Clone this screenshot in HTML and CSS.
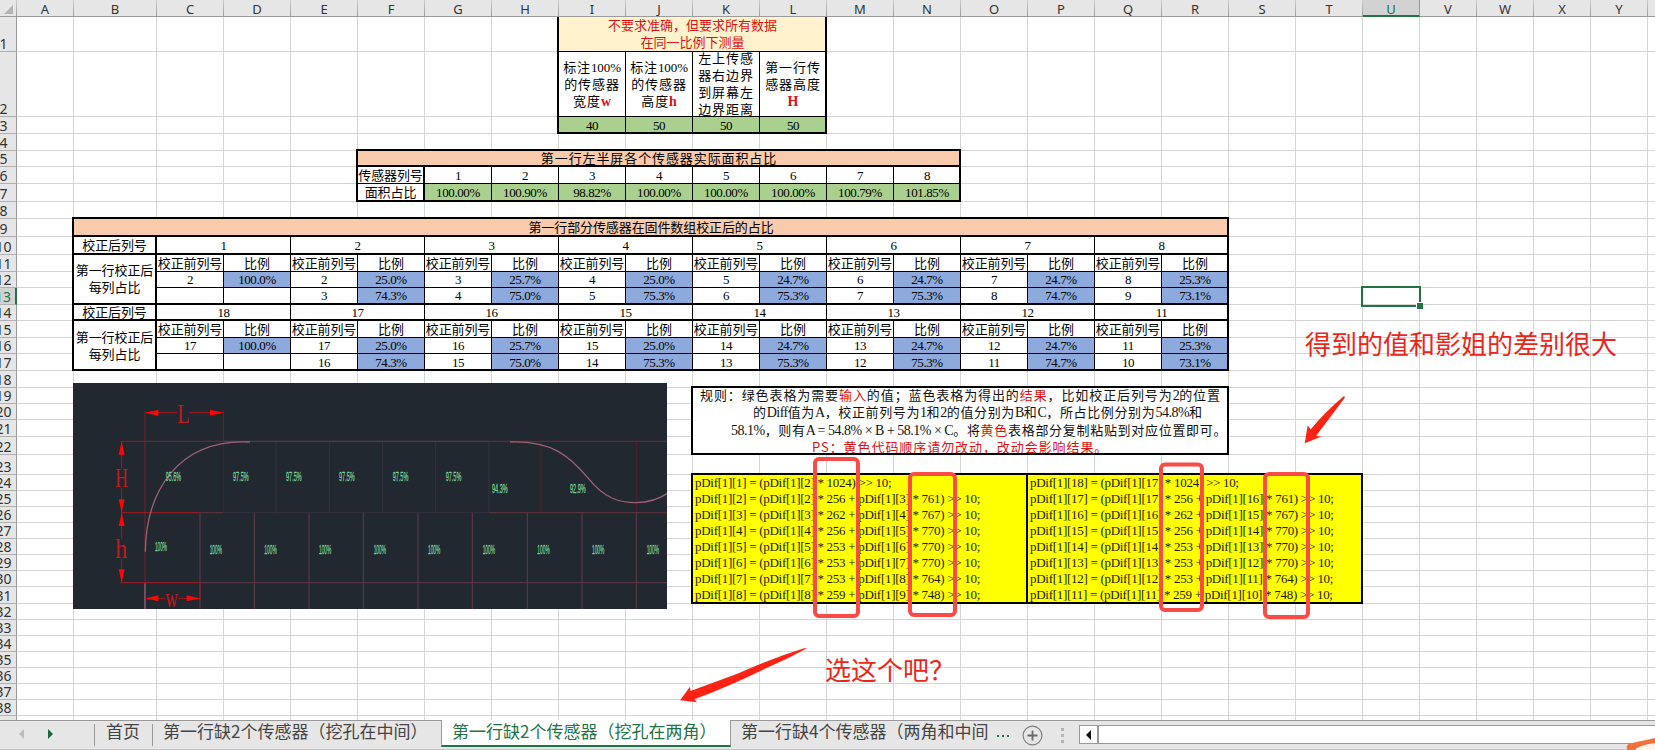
FILE: index.html
```html
<!DOCTYPE html>
<html lang="zh-CN">
<head>
<meta charset="utf-8">
<title>传感器面积占比</title>
<link rel="stylesheet" href="styles.css">
</head>
<body>
<main class="window">
<section class="sheet">
  <div class="colhead">
    <div class="corner"><svg viewBox="0 0 17 16"><path d="M13 5v9H4z" fill="#b4b4b4"/></svg></div>
    <div>A</div><div>B</div><div>C</div><div>D</div><div>E</div><div>F</div><div>G</div><div>H</div><div>I</div><div>J</div><div>K</div><div>L</div><div>M</div><div>N</div><div>O</div><div>P</div><div>Q</div><div>R</div><div>S</div><div>T</div><div class="on">U</div><div>V</div><div>W</div><div>X</div><div>Y</div><div></div>
  </div>
  <div class="rowhead">
    <div>1</div><div>2</div><div>3</div><div>4</div><div>5</div><div>6</div><div>7</div><div>8</div><div>9</div><div>10</div><div>11</div><div>12</div><div class="on">13</div><div>14</div><div>15</div><div>16</div><div>17</div><div>18</div><div>19</div><div>20</div><div>21</div><div>22</div><div>23</div><div>24</div><div>25</div><div>26</div><div>27</div><div>28</div><div>29</div><div>30</div><div>31</div><div>32</div><div>33</div><div>34</div><div>35</div><div>36</div><div>37</div><div>38</div><div></div>
  </div>
  <div class="vlines"><i></i><i></i><i></i><i></i><i></i><i></i><i></i><i></i><i></i><i></i><i></i><i></i><i></i><i></i><i></i><i></i><i></i><i></i><i></i><i></i><i></i><i></i><i></i><i></i><i></i></div>
  <div class="hlines"><i></i><i></i><i></i><i></i><i></i><i></i><i></i><i></i><i></i><i></i><i></i><i></i><i></i><i></i><i></i><i></i><i></i><i></i><i></i><i></i><i></i><i></i><i></i><i></i><i></i><i></i><i></i><i></i><i></i><i></i><i></i><i></i><i></i><i></i><i></i><i></i><i></i><i></i></div>

  <div class="tbl inputs">
    <div class="title cream"><p>不要求准确，但要求所有数据<br>在同一比例下测量</p></div>
    <div class="wide"><p>标注<span>100%</span><br>的传感器<br>宽度<b>w</b></p></div>
    <div class="wide"><p>标注<span>100%</span><br>的传感器<br>高度<b>h</b></p></div>
    <div class="wide"><p>左上传感<br>器右边界<br>到屏幕左<br>边界距离</p></div>
    <div class="wide"><p>第一行传<br>感器高度<br><b>H</b></p></div>
    <div class="green">40</div><div class="green">50</div><div class="green">50</div><div class="green">50</div>
  </div>

  <div class="tbl area">
    <div class="title peach wide thick">第一行左半屏各个传感器实际面积占比</div>
    <div class="cn side">传感器列号</div><div>1</div><div>2</div><div>3</div><div>4</div><div>5</div><div>6</div><div>7</div><div>8</div>
    <div class="cn side">面积占比</div><div class="green">100.00%</div><div class="green">100.90%</div><div class="green">98.82%</div><div class="green">100.00%</div><div class="green">100.00%</div><div class="green">100.00%</div><div class="green">100.79%</div><div class="green">101.85%</div>
  </div>

  <div class="tbl ratio">
    <div class="title peach cn thick">第一行部分传感器在固件数组校正后的占比</div>
    <div class="cn side thick">校正后列号</div><div class="two thick">1</div><div class="two thick">2</div><div class="two thick">3</div><div class="two thick">4</div><div class="two thick">5</div><div class="two thick">6</div><div class="two thick">7</div><div class="two thick">8</div>
    <div class="cn side tall thick"><p>第一行校正后<br>每列占比</p></div>
    <div class="cn">校正前列号</div><div class="cn">比例</div><div class="cn">校正前列号</div><div class="cn">比例</div><div class="cn">校正前列号</div><div class="cn">比例</div><div class="cn">校正前列号</div><div class="cn">比例</div><div class="cn">校正前列号</div><div class="cn">比例</div><div class="cn">校正前列号</div><div class="cn">比例</div><div class="cn">校正前列号</div><div class="cn">比例</div><div class="cn">校正前列号</div><div class="cn">比例</div>
    <div>2</div><div class="blue">100.0%</div><div>2</div><div class="blue">25.0%</div><div>3</div><div class="blue">25.7%</div><div>4</div><div class="blue">25.0%</div><div>5</div><div class="blue">24.7%</div><div>6</div><div class="blue">24.7%</div><div>7</div><div class="blue">24.7%</div><div>8</div><div class="blue">25.3%</div>
    <div class="thick"></div><div class="thick"></div><div class="thick">3</div><div class="blue thick">74.3%</div><div class="thick">4</div><div class="blue thick">75.0%</div><div class="thick">5</div><div class="blue thick">75.3%</div><div class="thick">6</div><div class="blue thick">75.3%</div><div class="thick">7</div><div class="blue thick">75.3%</div><div class="thick">8</div><div class="blue thick">74.7%</div><div class="thick">9</div><div class="blue thick">73.1%</div>
    <div class="cn side thick">校正后列号</div><div class="two thick">18</div><div class="two thick">17</div><div class="two thick">16</div><div class="two thick">15</div><div class="two thick">14</div><div class="two thick">13</div><div class="two thick">12</div><div class="two thick">11</div>
    <div class="cn side tall"><p>第一行校正后<br>每列占比</p></div>
    <div class="cn">校正前列号</div><div class="cn">比例</div><div class="cn">校正前列号</div><div class="cn">比例</div><div class="cn">校正前列号</div><div class="cn">比例</div><div class="cn">校正前列号</div><div class="cn">比例</div><div class="cn">校正前列号</div><div class="cn">比例</div><div class="cn">校正前列号</div><div class="cn">比例</div><div class="cn">校正前列号</div><div class="cn">比例</div><div class="cn">校正前列号</div><div class="cn">比例</div>
    <div>17</div><div class="blue">100.0%</div><div>17</div><div class="blue">25.0%</div><div>16</div><div class="blue">25.7%</div><div>15</div><div class="blue">25.0%</div><div>14</div><div class="blue">24.7%</div><div>13</div><div class="blue">24.7%</div><div>12</div><div class="blue">24.7%</div><div>11</div><div class="blue">25.3%</div>
    <div></div><div></div><div>16</div><div class="blue">74.3%</div><div>15</div><div class="blue">75.0%</div><div>14</div><div class="blue">75.3%</div><div>13</div><div class="blue">75.3%</div><div>12</div><div class="blue">75.3%</div><div>11</div><div class="blue">74.7%</div><div>10</div><div class="blue">73.1%</div>
  </div>

  <div class="rules">
    <p class="r1">规则：绿色表格为需要<b>输入</b>的值；蓝色表格为得出的<b>结果</b>，比如校正后列号为<span>2</span>的位置</p>
    <p class="r2">的<span>Diff</span>值为<span>A</span>，校正前列号为<span>1</span>和<span>2</span>的值分别为<span>B</span>和<span>C</span>，所占比例分别为<span>54.8%</span>和</p>
    <p class="r3"><span>58.1%</span>，则有<span>A = 54.8% × B + 58.1% × C</span>。将<b>黄色</b>表格部分复制粘贴到对应位置即可。</p>
    <p class="r4"><b>PS：黄色代码顺序请勿改动，改动会影响结果。</b></p>
  </div>

  <div class="code left">
    <p>pDif[1][1] = (pDif[1][2] * 1024) &gt;&gt; 10;</p>
    <p>pDif[1][2] = (pDif[1][2] * 256 + pDif[1][3] * 761) &gt;&gt; 10;</p>
    <p>pDif[1][3] = (pDif[1][3] * 262 + pDif[1][4] * 767) &gt;&gt; 10;</p>
    <p>pDif[1][4] = (pDif[1][4] * 256 + pDif[1][5] * 770) &gt;&gt; 10;</p>
    <p>pDif[1][5] = (pDif[1][5] * 253 + pDif[1][6] * 770) &gt;&gt; 10;</p>
    <p>pDif[1][6] = (pDif[1][6] * 253 + pDif[1][7] * 770) &gt;&gt; 10;</p>
    <p>pDif[1][7] = (pDif[1][7] * 253 + pDif[1][8] * 764) &gt;&gt; 10;</p>
    <p>pDif[1][8] = (pDif[1][8] * 259 + pDif[1][9] * 748) &gt;&gt; 10;</p>
  </div>
  <div class="code right">
    <p>pDif[1][18] = (pDif[1][17] * 1024) &gt;&gt; 10;</p>
    <p>pDif[1][17] = (pDif[1][17] * 256 + pDif[1][16] * 761) &gt;&gt; 10;</p>
    <p>pDif[1][16] = (pDif[1][16] * 262 + pDif[1][15] * 767) &gt;&gt; 10;</p>
    <p>pDif[1][15] = (pDif[1][15] * 256 + pDif[1][14] * 770) &gt;&gt; 10;</p>
    <p>pDif[1][14] = (pDif[1][14] * 253 + pDif[1][13] * 770) &gt;&gt; 10;</p>
    <p>pDif[1][13] = (pDif[1][13] * 253 + pDif[1][12] * 770) &gt;&gt; 10;</p>
    <p>pDif[1][12] = (pDif[1][12] * 253 + pDif[1][11] * 764) &gt;&gt; 10;</p>
    <p>pDif[1][11] = (pDif[1][11] * 259 + pDif[1][10] * 748) &gt;&gt; 10;</p>
  </div>
  <div class="selection"></div>
</section>

<svg class="drawing" viewBox="219 39 1782 678">
  <rect x="219" y="39" width="1782" height="678" fill="#222830"/>
  <g fill="none" stroke-width="3">
    <path stroke="#33303f" d="M828 214V428M988 214V428M1148 214V428M1307 214V428M1467 214V428M670 428H1467"/>
    <path stroke="#3d2833" d="M670 214V428"/>
    <path stroke="#57394c" stroke-width="4" d="M670 214H1467"/>
    <path stroke="#672634" stroke-width="4" d="M435 214H670M1467 214H2001"/>
    <path stroke="#5c1b2b" d="M1623 214V428M1909 214V428"/>
    <path stroke="#613543" d="M600 428H670M1467 428H2001"/>
    <path stroke="#62394a" d="M600 428V717M763 428V717M927 428V717M1090 428V717M1254 428V717M1417 428V717M1582 428V717M1746 428V717M1909 428V717M600 638H2001"/>
    <path stroke="#74202a" d="M435 124V640M670 124V214"/>
    <path stroke="#9a6278" stroke-width="4" d="M435 640V717"/>
    <path stroke="#a61a20" d="M362 214H435M435 128H531M567 128H670M365 214V295M365 355V505M365 566V640M362 428H600M362 638H600M435 685H496M535 685H600M600 638V690"/>
    <path stroke="#9b6175" stroke-width="4" d="M436 545C438 370 530 205 750 216M1530 216C1660 212 1710 260 1765 325C1815 387 1860 398 1909 398C1950 397 1978 386 2001 371"/>
  </g>
  <path fill="#fa0707" d="M435 128L475 119V137zM670 128L630 119V137zM435 685L475 676V694zM600 685L560 676V694zM365 214L356 254H374zM365 428L356 388H374zM365 428L356 468H374zM365 638L356 598H374z"/>
  <g class="dims">
    <text x="532" y="159" textLength="37" lengthAdjust="spacingAndGlyphs">L</text>
    <text x="346" y="352" textLength="38" lengthAdjust="spacingAndGlyphs">H</text>
    <text x="346" y="563" textLength="36" lengthAdjust="spacingAndGlyphs">h</text>
    <text x="496" y="711" textLength="38" lengthAdjust="spacingAndGlyphs">w</text>
  </g>
  <g class="pct">
    <text x="497" y="334" textLength="46" lengthAdjust="spacingAndGlyphs">95.6%</text>
    <text x="699" y="333" textLength="47" lengthAdjust="spacingAndGlyphs">97.5%</text>
    <text x="858" y="333" textLength="47" lengthAdjust="spacingAndGlyphs">97.5%</text>
    <text x="1017" y="333" textLength="47" lengthAdjust="spacingAndGlyphs">97.5%</text>
    <text x="1178" y="333" textLength="47" lengthAdjust="spacingAndGlyphs">97.5%</text>
    <text x="1337" y="333" textLength="47" lengthAdjust="spacingAndGlyphs">97.5%</text>
    <text x="1476" y="369" textLength="47" lengthAdjust="spacingAndGlyphs">94.3%</text>
    <text x="1710" y="369" textLength="47" lengthAdjust="spacingAndGlyphs">92.9%</text>
    <text x="465" y="543" textLength="36" lengthAdjust="spacingAndGlyphs">100%</text>
    <text x="629" y="552" textLength="37" lengthAdjust="spacingAndGlyphs">100%</text>
    <text x="793" y="552" textLength="37" lengthAdjust="spacingAndGlyphs">100%</text>
    <text x="957" y="552" textLength="37" lengthAdjust="spacingAndGlyphs">100%</text>
    <text x="1121" y="552" textLength="37" lengthAdjust="spacingAndGlyphs">100%</text>
    <text x="1284" y="552" textLength="37" lengthAdjust="spacingAndGlyphs">100%</text>
    <text x="1448" y="552" textLength="37" lengthAdjust="spacingAndGlyphs">100%</text>
    <text x="1612" y="552" textLength="37" lengthAdjust="spacingAndGlyphs">100%</text>
    <text x="1776" y="552" textLength="37" lengthAdjust="spacingAndGlyphs">100%</text>
    <text x="1940" y="552" textLength="37" lengthAdjust="spacingAndGlyphs">100%</text>
  </g>
</svg>

<footer class="tabs">
  <div class="nav">
    <svg width="5" height="10" viewBox="0 0 5 10"><path d="M5 0v10L0 5z" fill="#bdbdbd"/></svg>
    <svg width="5" height="10" viewBox="0 0 5 10"><path d="M0 0v10l5-5z" fill="#19683d"/></svg>
  </div>
  <div class="tab home">首页</div>
  <div class="tab middle">第一行缺2个传感器（挖孔在中间）</div>
  <div class="tab active">第一行缺2个传感器（挖孔在两角）</div>
  <div class="tab last">第一行缺4个传感器（两角和中间</div>
  <div class="more"><i></i><i></i><i></i></div>
  <svg class="add" width="21" height="21" viewBox="0 0 21 21"><circle cx="10.5" cy="10.5" r="9.4" fill="none" stroke="#808080" stroke-width="1.2"/><path d="M5.5 10.5h10M10.5 5.5v10" stroke="#6a6a6a" stroke-width="1.8"/></svg>
  <div class="grip"><i></i><i></i><i></i></div>
  <div class="scroll"><span><svg width="6" height="10" viewBox="0 0 6 10"><path d="M5 0v10L0 5z" fill="#111"/></svg></span></div>
</footer>

<svg class="marks" viewBox="0 0 1655 750">
  <g fill="none" stroke="#fb4b47" stroke-width="4">
    <rect x="815" y="459" width="43" height="157" rx="4"/>
    <rect x="910" y="474" width="45" height="141" rx="4"/>
    <rect x="1161" y="464.500" width="41" height="145.500" rx="4"/>
    <rect x="1265" y="474" width="43" height="143" rx="4"/>
  </g>
  <g fill="#fd2314">
    <path d="M1344 396L1345 397.500L1316 436L1321.500 436.500L1304.700 443.200L1307.700 425.300L1310.500 429.500Q1326 411 1344 396z"/>
    <path d="M680 700.300L690 686.700L690.500 691L738 673.500Q770 659 804 648.300L807 648.300Q788 659 767 667.700Q730 686 694.300 699.300L697 702.200z"/>
  </g>
  <path d="M1627 750Q1625 744 1632 743L1655 738V743Q1637 746 1635 750z" fill="#f4703a"/>
  <path d="M1635 750Q1640 745 1655 743V750z" fill="#fff3ec"/>
</svg>
<p class="note diff">得到的值和影姐的差别很大</p>
<p class="note pick">选这个吧？</p>
</main>
</body>
</html>
```

FILE: styles.css
```css
* { box-sizing: border-box; }
body { margin: 0; background: #fff; overflow: hidden; }
p { margin: 0; }
b { font-weight: normal; color: #d81212; }

.window {
  --cols: 57px 83px repeat(18, 67px) repeat(5, 57px) 8px;
  --rows: 35px 65px 17px 17px 16px 17px 18px 17px 18px 18px 17px 16px 17px 16px 17px 16px 17px 17px 16px 16px 17px 18px 20px repeat(7, 16px) 17px repeat(7, 16px) 4px;
  position: relative;
  width: 1655px;
  height: 750px;
  overflow: hidden;
  display: flex;
  flex-direction: column;
}

/* spreadsheet grid */
.sheet {
  display: grid;
  grid-template-columns: 17px var(--cols);
  grid-template-rows: 17px var(--rows);
  height: 720px;
}
.colhead {
  grid-area: 1 / 1 / 2 / -1;
  display: grid;
  grid-template-columns: subgrid;
  font: 13px/17px "Noto Sans", sans-serif;
  color: #333;
  text-align: center;
  background: #e6e6e6;
}
.colhead > div {
  border-bottom: 1px solid #999;
  border-right: 1px solid;
  border-image: linear-gradient(#cfcfcf, #999) 1;
  padding-top: 1px;
  height: 17px;
  line-height: 16px;
}
.colhead .corner { padding: 0; }
.corner svg { display: block; width: 17px; height: 16px; }
.colhead .on { background: #d2d2d2; color: #217346; border-image: none; border-right-color: #999; border-bottom: 2px solid #217346; }
.rowhead {
  grid-area: 2 / 1 / -1 / 2;
  display: grid;
  grid-template-rows: subgrid;
  font: 14px/14px "Noto Sans", sans-serif;
  color: #333;
  background: #e6e6e6;
}
.rowhead > div {
  display: flex;
  align-items: flex-end;
  justify-content: center;
  margin-left: -9px;
  border-right: 1px solid #999;
  border-bottom: 1px solid #b0b0b0;
  min-height: 0;
}
.rowhead > div:last-child { border-bottom: 0; }
.rowhead .on { background: #d2d2d2; color: #217346; border-right: 2px solid #217346; }
.vlines { grid-area: 2 / 2 / -1 / -1; display: grid; grid-template-columns: subgrid; }
.vlines i { border-right: 1px solid #d4d4d4; }
.hlines { grid-area: 2 / 2 / -1 / -1; display: grid; grid-template-rows: subgrid; }
.hlines i { border-bottom: 1px solid #d4d4d4; }

/* bordered data blocks */
.tbl {
  position: relative;
  display: grid;
  grid-template-columns: subgrid;
  grid-template-rows: subgrid;
  font: 13px/17px "Liberation Serif", "Noto Sans CJK SC", serif;
  letter-spacing: -0.4px;
  color: #000;
}
.tbl::after, .rules::after, .code::after {
  content: "";
  position: absolute;
  inset: -2px 0 0 -2px;
  border: 2px solid #000;
}
.tbl > div {
  display: grid;
  place-content: center;
  text-align: center;
  white-space: nowrap;
  background: #fff;
  border-right: 1px solid #000;
  border-bottom: 1px solid #000;
  min-height: 0;
}
.tbl .title { grid-column: 1 / -1; }
.tbl .two { grid-column: span 2; }
.tbl .tall { grid-row: span 3; }
.tbl .thick { border-bottom-width: 2px; }
.tbl .side { border-right-width: 2px; }
.tbl .cn { font-family: "Noto Sans CJK SC", sans-serif; letter-spacing: -0.1px; padding-bottom: 2px; line-height: 15px; }
.tbl .tall { line-height: 17px; }
.tbl .wide { font-family: "Noto Sans CJK SC", sans-serif; letter-spacing: 0.9px; padding-bottom: 2px; }
.tbl .title.wide { line-height: 13px; }
.wide span, .wide b { font-family: "Liberation Serif", serif; letter-spacing: -0.1px; line-height: 0; }
.wide b { font-size: 14px; font-weight: bold; }
.tbl .green { background: #a9d08e; }
.tbl .blue { background: #8ea9db; }
.tbl .peach { background: #f8cbad; }
.tbl .cream { background: #fff2cc; color: #d81212; font-family: "Noto Sans CJK SC", sans-serif; letter-spacing: 0; padding-bottom: 2px; }

.inputs { grid-area: 2 / 10 / 5 / 14; }
.inputs::after { top: 0; border-top: 0; }
.area { grid-area: 6 / 7 / 9 / 16; }
.ratio { grid-area: 10 / 3 / 19 / 20; }

.rules {
  grid-area: 20 / 12 / 24 / 20;
  position: relative;
  background: #fff;
  font: 13px/17.400px "Noto Sans CJK SC", sans-serif;
  color: #111;
  white-space: nowrap;
  height: 67px;
}
.rules p { position: relative; top: -2px; height: 17.400px; }
.rules span { font-family: "Liberation Serif", serif; font-size: 14px; letter-spacing: -0.5px; line-height: 0; }
.r1 { padding-left: 7px; letter-spacing: 0.9px; }
.r2 { padding-left: 60px; letter-spacing: 0.64px; }
.r3 { padding-left: 38px; letter-spacing: 0.7px; }
.r4 { padding-left: 119px; letter-spacing: 0.93px; }

.code {
  position: relative;
  background: #ff0;
  padding: 0 0 0 2px;
  font: 13px/16px "Liberation Serif", serif;
  letter-spacing: -0.29px;
  color: #1a1a00;
  white-space: nowrap;
}
.code.left { grid-area: 25 / 12 / 33 / 17; }
.code.right { grid-area: 25 / 17 / 33 / 22; }

.selection {
  grid-area: 14 / 22 / 15 / 23;
  position: relative;
  margin: -2px -1px -2px -2px;
  border: 2px solid #217346;
}
.selection::after {
  content: "";
  position: absolute;
  right: -4px;
  bottom: -4px;
  width: 6px;
  height: 6px;
  background: #217346;
  border: solid #fff;
  border-width: 1px 0 0 1px;
}

/* embedded drawing */
.drawing { position: absolute; left: 73px; top: 383px; width: 594px; height: 226px; }
.dims { font: 84px "Liberation Serif", serif; fill: #c11a1e; }
.pct { font: 38px "Liberation Sans", sans-serif; fill: #78d698; stroke: #78d698; stroke-width: 0.8px; }

/* sheet tab bar */
.tabs {
  height: 30px;
  display: flex;
  background: #e6e6e6;
  border-top: 1px solid #999;
  border-bottom: 1px solid #c6c6c6;
  font: 17px/20px "Noto Sans CJK SC", sans-serif;
  color: #444;
  white-space: nowrap;
}
.nav { width: 94px; padding: 8px 0 0 19px; display: flex; gap: 24px; }
.tab { height: 25px; }
.home { width: 58px; padding-left: 11px; border-left: 1px solid #999; margin-top: 3px; height: 22px; line-height: 14px; }
.middle { width: 289px; padding-left: 10px; border-left: 1px solid #999; margin-top: 3px; height: 22px; line-height: 14px; }
.active { width: 290px; margin-top: -1px; height: 27px; padding-left: 10px; line-height: 21px; background: #fff; color: #217346; border: solid #999; border-width: 0 1px 0 1px; border-bottom: 2px solid #217346; }
.last { width: 266px; padding-left: 10px; }
.more { display: flex; gap: 3px; padding-top: 14px; width: 25px; }
.more i { width: 2px; height: 2px; background: #217346; }
.add { margin-top: 4px; }
.grip { width: 36px; padding: 7px 0 0 18px; display: flex; flex-direction: column; gap: 3px; }
.grip i { width: 3px; height: 3px; background: #b5b5b5; }
.scroll { flex: 1; margin-top: 4px; height: 19px; background: #fff; border: 1px solid #999; border-right: 0; }
.scroll span { display: flex; align-items: center; justify-content: center; width: 19px; height: 17px; border-right: 2px solid #999; }

/* annotations over the sheet */
.marks { position: absolute; inset: 0; width: 1655px; height: 750px; }
.note { position: absolute; font: 26px/30px "Noto Sans CJK SC", sans-serif; color: #e8271c; white-space: nowrap; }
.diff { left: 1305px; top: 328px; }
.pick { left: 825px; top: 654px; }
```
